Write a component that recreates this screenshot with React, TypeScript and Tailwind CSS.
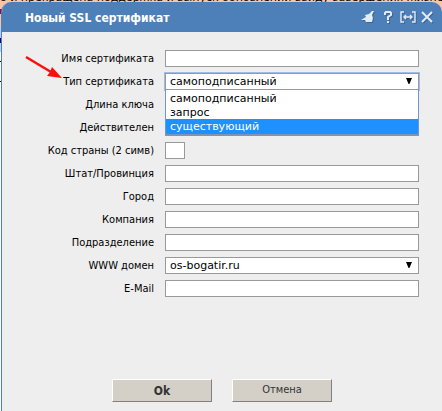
import { useState, type ReactNode } from "react";

const labelFont = "font-['DejaVu_Sans_Condensed','DejaVu_Sans',sans-serif]";
const box = "block h-[17px] border border-[#999] bg-white px-1 text-[11px] leading-[15px] outline-none";

function Row({ id, label, children }: { id: string; label: string; children?: ReactNode }) {
  return (
    <div className="flex h-[17px] items-center">
      <label htmlFor={id} className={`w-[152px] shrink-0 text-right text-[11px] leading-[17px] whitespace-nowrap ${labelFont}`}>
        {label}
      </label>
      <div className="relative ml-[11px] min-w-0 flex-1">{children}</div>
    </div>
  );
}

function Arrow() {
  return (
    <svg className="pointer-events-none absolute top-[5px] right-[7px]" width="6" height="6" viewBox="0 0 6 6" aria-hidden="true">
      <path d="M0 0h6L3 7z" fill="#000" />
    </svg>
  );
}

function Tools() {
  const button = "flex h-4 items-center justify-center";
  return (
    <div className="flex items-center text-[#e3ebf5] drop-shadow-[1px_1px_0_#3c6494]">
      <button className={`${button} w-[14px]`} aria-label="Закрепить">
        <svg width="14" height="12" viewBox="0 0 14 12" fill="currentColor"><path d="M0 9 5 6 4 4 8 3 11 0h2l-2 4 1 3-1 4H5L4 9z" /></svg>
      </button>
      <button className={`${button} ml-[9px] w-[8px]`} aria-label="Справка">
        <svg width="8" height="12" viewBox="0 0 8 12" fill="none" stroke="currentColor" strokeWidth="2"><path d="M1 4V2l1-1h4l1 1v2L4 6v3M4 10v2" /></svg>
      </button>
      <button className={`${button} ml-[8px] w-4`} aria-label="Растянуть">
        <svg width="16" height="12" viewBox="0 0 16 12" fill="none" stroke="currentColor"><path d="M4 1H1v10h3M12 1h3v10h-3M4 6h8M6 4 4 6l2 2M10 4l2 2-2 2" strokeWidth="1.4" /></svg>
      </button>
      <button className={`${button} ml-[5px] w-3`} aria-label="Закрыть">
        <svg width="12" height="12" viewBox="0 0 12 12" fill="none" stroke="currentColor" strokeWidth="2"><path d="m1 1 10 10M11 1 1 11" /></svg>
      </button>
    </div>
  );
}

const types = ["самоподписанный", "запрос", "существующий"];
const push = "h-[23px] w-[100px] border border-t-white border-l-white border-r-[#808080] border-b-[#808080] bg-[#d4d0c8] text-[#333]";

export default function App() {
  const [type, setType] = useState(types[0]);
  return (
    <div className="relative min-h-screen overflow-hidden bg-white font-['DejaVu_Sans',sans-serif] text-black">
      <div className="absolute inset-x-0 top-0 h-[27px] overflow-hidden bg-[#fbc5a5]">
        <p className="-mt-[10px] text-[11px] leading-[15px] whitespace-nowrap">о и прекращена поддержка и выпуск обновлений ввиду завершения жизненного цикла</p>
      </div>
      <div className="absolute top-[9px] left-0 h-[5px] w-1 bg-[#8c1040]" />
      <div className="absolute top-[27px] left-0 h-[25px] w-1 bg-[#b8d0f0]" />
      <div className="absolute top-[38px] left-0 h-[5px] w-1 bg-[#000080]" />
      <div className="absolute top-[61px] left-0 h-px w-1 bg-black" />
      <div className="absolute top-[81px] left-0 h-px w-1 bg-black" />
      <main className="relative pt-[2px] pl-px">
        <section className="flex min-h-[calc(100vh-2px)] flex-col overflow-hidden rounded-t-[10px] border-l border-[#4d80b8] bg-[#eee]">
          <header className="flex h-[30px] items-center justify-between bg-[#4d80b8] pr-[9px] pl-[23px]">
            <h1 className={`pt-px text-xs font-bold text-white ${labelFont}`}>Новый SSL сертификат</h1>
            <Tools />
          </header>
          <form className="flex flex-1 flex-col" onSubmit={(e) => e.preventDefault()}>
            <div className="flex flex-col gap-[6px] pt-[18px] pr-[23px]">
              <Row id="name" label="Имя сертификата"><input id="name" className={`${box} w-full`} /></Row>
              <Row id="type" label="Тип сертификата">
                <select id="type" value={type} onChange={(e) => setType(e.target.value)} className={`${box} w-full appearance-none border-[#6f96d2] shadow-[0_0_0_1px_#9dbcec]`}>
                  {types.map((t) => <option key={t}>{t}</option>)}
                </select>
                <Arrow />
                <ul className="absolute top-[17px] left-0 z-10 w-full border border-[#6f96d2] border-t-0 border-b-2 border-b-[#8193b0] bg-white pt-px text-[11px] leading-4">
                  {types.map((t) => (
                    <li key={t} onClick={() => setType(t)} className={t === "существующий" ? "h-[15px] bg-[#1e90ff] px-1 text-white" : "h-[14px] px-1"}>{t}</li>
                  ))}
                </ul>
              </Row>
              <Row id="key" label="Длина ключа"><input id="key" className={`${box} w-full`} /></Row>
              <Row id="valid" label="Действителен"><input id="valid" className={`${box} w-full`} /></Row>
              <Row id="country" label="Код страны (2 симв)"><input id="country" maxLength={2} className={`${box} w-5`} /></Row>
              <Row id="state" label="Штат/Провинция"><input id="state" className={`${box} w-full`} /></Row>
              <Row id="city" label="Город"><input id="city" className={`${box} w-full`} /></Row>
              <Row id="company" label="Компания"><input id="company" className={`${box} w-full`} /></Row>
              <Row id="unit" label="Подразделение"><input id="unit" className={`${box} w-full`} /></Row>
              <Row id="domain" label="WWW домен">
                <select id="domain" className={`${box} w-full appearance-none`}><option>os-bogatir.ru</option></select>
                <Arrow />
              </Row>
              <Row id="email" label="E-Mail"><input id="email" type="email" className={`${box} w-full`} /></Row>
            </div>
            <div className="mt-auto flex justify-center gap-5 pb-[9px]">
              <button type="submit" className={`${push} text-xs font-bold ${labelFont}`}>Ok</button>
              <button type="button" className={`${push} text-[11px] ${labelFont}`}>Отмена</button>
            </div>
          </form>
        </section>
        <svg className="pointer-events-none absolute top-[54px] left-[24px]" width="40" height="26" viewBox="0 0 40 26" aria-hidden="true">
          <path d="M2 3 27 18" stroke="#ff0c0c" strokeWidth="2.5" />
          <path d="M38 24 23 22l3-4 2-5z" fill="#ff0c0c" />
        </svg>
      </main>
    </div>
  );
}
